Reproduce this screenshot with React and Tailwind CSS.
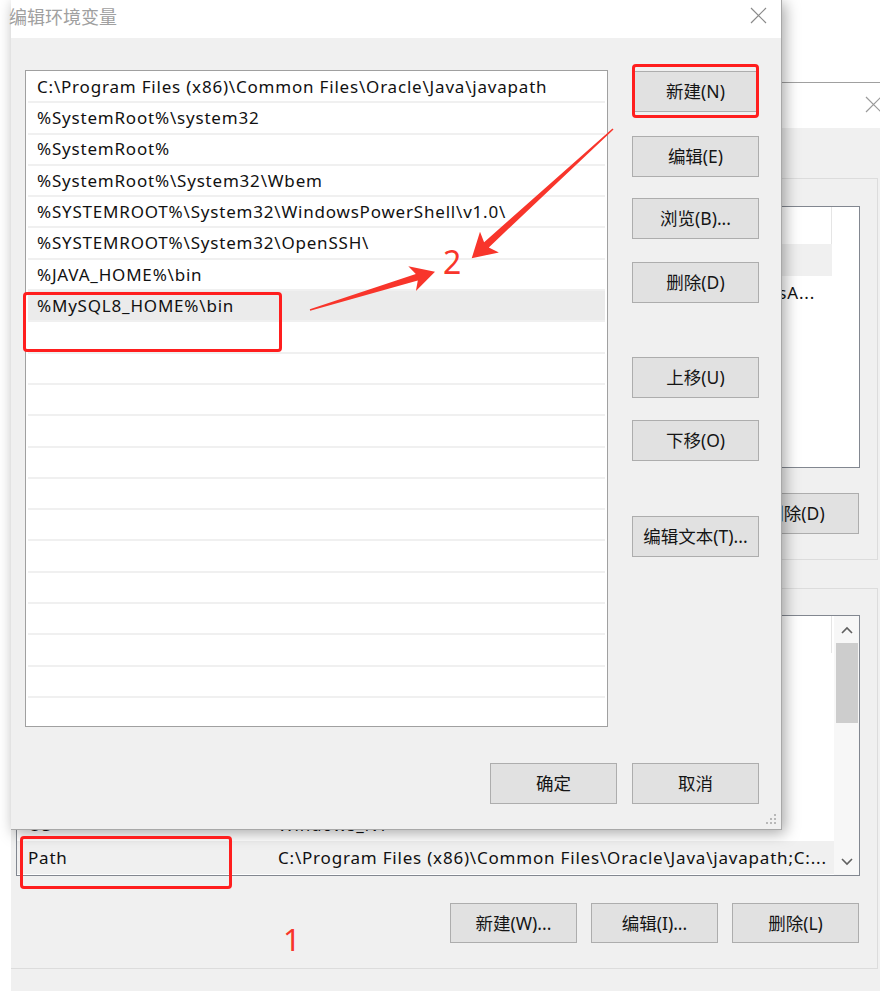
import React from 'react';

const FONT = "font-['Noto_Sans','Noto_Sans_CJK_SC',sans-serif]";

const paths = [
  'C:\\Program Files (x86)\\Common Files\\Oracle\\Java\\javapath',
  '%SystemRoot%\\system32',
  '%SystemRoot%',
  '%SystemRoot%\\System32\\Wbem',
  '%SYSTEMROOT%\\System32\\WindowsPowerShell\\v1.0\\',
  '%SYSTEMROOT%\\System32\\OpenSSH\\',
  '%JAVA_HOME%\\bin',
  '%MySQL8_HOME%\\bin',
];

// only the parts of the background lists that peek out from behind the front dialog
const userVars = [
  ['', 'sA...', true],
  ['', ''],
  ['', ''],
];

const sysVars = [
  ['', ''],
  ['', ''],
  ['', ''],
  ['OS', 'Windows_NT'],
  ['Path', 'C:\\Program Files (x86)\\Common Files\\Oracle\\Java\\javapath;C:...'],
];

function CloseX({ color = '#8a8a8a' }) {
  return (
    <svg width="17" height="17" viewBox="0 0 17 17">
      <path d="M1 1 L16 16 M16 1 L1 16" stroke={color} strokeWidth="1.2" fill="none" />
    </svg>
  );
}

function Btn({ children, className = 'h-[41px]' }) {
  return (
    <div className={`w-[127px] shrink-0 flex items-center justify-center bg-[#e1e1e1] border border-[#adadad] text-[17.5px] text-[#151515] ${className}`}>
      {children}
    </div>
  );
}

function Chevron({ up }) {
  return (
    <svg width="12" height="8" viewBox="0 0 12 8">
      <path d={up ? 'M1 7 L6 2 L11 7' : 'M1 1 L6 6 L11 1'} stroke="#606060" strokeWidth="1.6" fill="none" />
    </svg>
  );
}

function VarHeader() {
  return (
    <div className="h-[37px] flex shrink-0 bg-white">
      <div className="w-[255px] border-r border-[#e5e5e5]" />
      <div className="w-[560px] border-r border-[#e5e5e5]" />
    </div>
  );
}

function VarRow({ name, value, active, alignEnd }) {
  return (
    <div className={`h-[33px] flex items-center shrink-0 ${active ? 'bg-[#f0f0f0]' : ''}`}>
      <div className="w-[255px] pl-[11px] whitespace-nowrap overflow-hidden">{name}</div>
      <div className={`w-[560px] pl-[6px] whitespace-nowrap overflow-hidden ${alignEnd ? 'text-right pr-[17px]' : ''}`}>{value}</div>
    </div>
  );
}

function BackWindow() {
  return (
    <div className="absolute left-[11px] top-[82px] w-[900px] h-[909px] bg-[#f0f0f0] border-t border-[#a0a0a0] flex flex-col">
      <div className="h-[45px] bg-white flex justify-end items-start pt-[13px] pr-[29px] shrink-0">
        <CloseX color="#9a9a9a" />
      </div>
      <div className="flex flex-col pt-[50px] text-[17px] tracking-[0.8px] text-[#111]">
        {/* user variables */}
        <div className="w-[867px] h-[382px] border-t border-r border-b border-[#dcdcdc] flex flex-col">
          <div className="mt-[27px] ml-[5px] w-[844px] h-[262px] bg-white border border-[#828790] flex flex-col overflow-hidden">
            <VarHeader />
            <div className="h-[32px] w-[815px] bg-[#f0f0f0] shrink-0" />
            {userVars.map(([n, v, end], i) => (
              <VarRow key={i} name={n} value={v} alignEnd={end} />
            ))}
          </div>
          <div className="mt-[25px] flex justify-end pr-[18px] tracking-normal">
            <Btn>删除(D)</Btn>
          </div>
        </div>

        {/* system variables */}
        <div className="mt-[28px] w-[867px] h-[381px] border-t border-r border-b border-[#dcdcdc] flex flex-col">
          <div className="mt-[26px] ml-[5px] w-[844px] h-[261px] bg-white border border-[#828790] flex overflow-hidden">
            <div className="flex-1 flex flex-col">
              <VarHeader />
              <div className="flex-1 flex flex-col justify-end pb-[1px] overflow-hidden">
                {sysVars.map(([n, v], i) => (
                  <VarRow key={i} name={n} value={v} active={n === 'Path'} />
                ))}
              </div>
            </div>
            <div className="w-[25px] bg-[#f7f7f7] flex flex-col items-center">
              <div className="h-[27px] flex items-center justify-center">
                <Chevron up />
              </div>
              <div className="w-[22px] h-[80px] bg-[#cdcdcd]" />
              <div className="flex-1" />
              <div className="h-[27px] flex items-center justify-center">
                <Chevron />
              </div>
            </div>
          </div>
          <div className="mt-[27px] flex justify-end gap-[14px] pr-[18px] tracking-normal">
            <Btn className="h-[40px]">新建(W)...</Btn>
            <Btn className="h-[40px]">编辑(I)...</Btn>
            <Btn className="h-[40px]">删除(L)</Btn>
          </div>
        </div>
      </div>
    </div>
  );
}

function Grip() {
  return (
    <svg width="12" height="12" viewBox="0 0 12 12" className="absolute right-[4px] bottom-[4px]">
      {[[9, 1], [5, 5], [9, 5], [1, 9], [5, 9], [9, 9]].map(([x, y]) => (
        <rect key={`${x}-${y}`} x={x} y={y} width="2" height="2" fill="#b8b8b8" />
      ))}
    </svg>
  );
}

function FrontWindow() {
  return (
    <div className="absolute left-[11px] top-0 w-[771px] h-[830px] bg-[#f0f0f0] border-r border-b border-[#a8a8a8] shadow-[3px_3px_14px_rgba(0,0,0,0.35)] flex flex-col">
      <div className="h-[38px] bg-white flex justify-between items-start shrink-0 pr-[14px]">
        <span className="ml-[-2px] mt-[6px] text-[18px] leading-[22px] text-[#a0a0a0]">编辑环境变量</span>
        <div className="mt-[7px]">
          <CloseX />
        </div>
      </div>

      <div className="flex-1 flex flex-col pl-[14px]">
        <div className="flex gap-[24px] mt-[32px]">
          <div className="w-[583px] h-[657px] bg-white border border-[#a0a0a0] pt-[1px] px-[2px] overflow-hidden text-[17px] tracking-[0.8px] text-[#111]">
            {Array.from({ length: 21 }).map((_, i) => (
              <div
                key={i}
                className={`h-[31.3px] border-b-2 border-[#f0f0f0] flex items-center pl-[9px] whitespace-nowrap ${i === 7 ? 'bg-[#ebebeb]' : ''}`}
              >
                {paths[i] || ''}
              </div>
            ))}
          </div>

          <div className="flex flex-col">
            <div className="mt-[1px]"><Btn>新建(N)</Btn></div>
            <div className="mt-[24px]"><Btn>编辑(E)</Btn></div>
            <div className="mt-[21px]"><Btn>浏览(B)...</Btn></div>
            <div className="mt-[23px]"><Btn>删除(D)</Btn></div>
            <div className="mt-[54px]"><Btn>上移(U)</Btn></div>
            <div className="mt-[22px]"><Btn>下移(O)</Btn></div>
            <div className="mt-[55px]"><Btn>编辑文本(T)...</Btn></div>
          </div>
        </div>

        <div className="mt-[36px] flex justify-end gap-[15px] pr-[22px]">
          <Btn>确定</Btn>
          <Btn>取消</Btn>
        </div>
      </div>
      <Grip />
    </div>
  );
}

function Annotations() {
  return (
    <>
      <div className="absolute left-[632px] top-[64px] w-[127px] h-[54px] border-[3px] border-[#ff1e1e] rounded-[4px]" />
      <div className="absolute left-[23px] top-[292px] w-[259px] h-[60px] border-[3px] border-[#ff1e1e] rounded-[4px]" />
      <div className="absolute left-[20px] top-[836px] w-[212px] h-[53px] border-[3px] border-[#ff1e1e] rounded-[4px]" />

      <svg width="880" height="991" viewBox="0 0 880 991" className="absolute left-0 top-0 pointer-events-none">
        <polygon
          fill="#f8352b"
          points="471.7,258.3 498.9,252.4 488.8,247.4 613.5,129.6 612.5,128.4 484.1,242.2 480,231.8"
        />
        <polygon
          fill="#f8352b"
          points="435,271.7 415.9,291.1 417.8,280.6 310.2,310.8 309.8,309.2 415.8,274 408.3,266.3"
        />
      </svg>

      <span className="absolute left-[443px] top-[246px] text-[32px] leading-none text-[#f8352b]">2</span>
      <span className="absolute left-[283px] top-[924px] text-[31px] leading-none text-[#f8352b]">1</span>
    </>
  );
}

export default function App() {
  return (
    <div className={`relative w-[880px] h-[991px] bg-white overflow-hidden ${FONT}`}>
      <BackWindow />
      <FrontWindow />
      <Annotations />
    </div>
  );
}
